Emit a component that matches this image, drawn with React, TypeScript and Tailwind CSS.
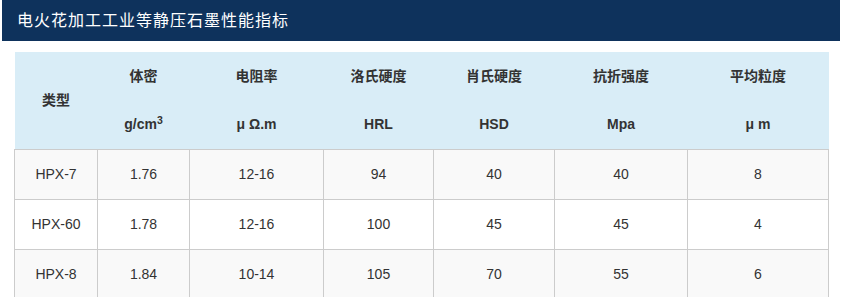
const rows = [
  ["HPX-7", "1.76", "12-16", "94", "40", "40", "8"],
  ["HPX-60", "1.78", "12-16", "100", "45", "45", "4"],
  ["HPX-8", "1.84", "10-14", "105", "70", "55", "6"],
];

const widths = ["w-[83px]", "w-[92px]", "w-[134px]", "w-[110px]", "w-[121px]", "w-[133px]", "w-[141px]"];

export default function App() {
  return (
    <div className="w-[842px] h-[297px] overflow-hidden bg-white font-['Liberation_Sans','Noto_Sans_CJK_SC',sans-serif] text-[#333]">
      <div className="mx-[2px] h-[41px] bg-[#0e325c] flex items-center pl-[15px]">
        <h2 className="text-[16px] tracking-[1px] text-white font-normal">电火花加工工业等静压石墨性能指标</h2>
      </div>
      <div className="px-[14px] pt-[11px]">
        <table className="w-[814px] table-fixed border-collapse text-[14px] text-center">
          <colgroup>
            {widths.map((w, i) => (
              <col key={i} className={w} />
            ))}
          </colgroup>
          <thead className="bg-[#d9edf7] font-bold">
            <tr className="h-[48px]">
              <th rowSpan={2} className="align-middle">类型</th>
              <th>体密</th>
              <th>电阻率</th>
              <th>洛氏硬度</th>
              <th>肖氏硬度</th>
              <th>抗折强度</th>
              <th>平均粒度</th>
            </tr>
            <tr className="h-[49px] border-b border-[#cccccc]">
              <th>
                g/cm<sup>3</sup>
              </th>
              <th>μ Ω.m</th>
              <th>HRL</th>
              <th>HSD</th>
              <th>Mpa</th>
              <th>μ m</th>
            </tr>
          </thead>
          <tbody>
            {rows.map((r, i) => (
              <tr key={i} className={`h-[50px] ${i % 2 === 0 ? "bg-[#f9f9f9]" : "bg-white"}`}>
                {r.map((c, j) => (
                  <td key={j} className="border border-[#cccccc] align-middle">
                    {c}
                  </td>
                ))}
              </tr>
            ))}
          </tbody>
        </table>
      </div>
    </div>
  );
}
